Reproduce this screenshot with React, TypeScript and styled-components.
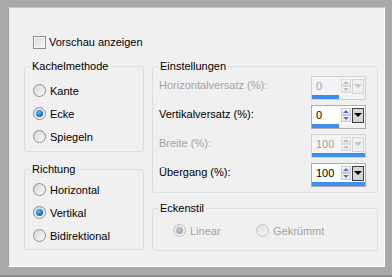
import styled, { createGlobalStyle } from "styled-components";

const Global = createGlobalStyle`
  html, body {
    margin: 0;
    padding: 0;
    background: #a9a9a9;
  }
  body {
    font-family: "Liberation Sans", Arial, sans-serif;
    font-size: 11px;
    color: #000;
  }
`;

const Frame = styled.div`
  width: 392px;
  height: 277px;
  box-sizing: border-box;
  padding: 7px 7px 8px 8px;
  background: #a9a9a9;
  border-bottom: 2px solid #8c8c8c;
`;

const Panel = styled.div`
  height: 100%;
  box-sizing: border-box;
  background: #f0f0f0;
  border-top: 1px solid #c4c4c4;
  border-left: 1px solid #9c9c9c;
  border-right: 1px solid #ffffff;
  border-bottom: 1px solid #ffffff;
  padding: 28px 0 0 15px;
  display: flex;
  flex-direction: column;
`;

const CheckRow = styled.label`
  display: flex;
  align-items: center;
  gap: 3px;
  margin-left: 9px;
  height: 13px;
  line-height: 13px;
`;

const CheckBox = styled.span`
  width: 13px;
  height: 13px;
  box-sizing: border-box;
  border: 1px solid #8e8f8f;
  background: linear-gradient(135deg, #d8d8d8 0%, #f6f6f6 100%);
  box-shadow: inset 0 0 0 1px #f4f4f4;
`;

const Columns = styled.div`
  display: flex;
  gap: 8px;
  margin-top: 10px;
`;

const Column = styled.div<{ $width: number; $gap: number }>`
  width: ${({ $width }) => $width}px;
  display: flex;
  flex-direction: column;
  gap: ${({ $gap }) => $gap}px;
`;

const Group = styled.fieldset`
  margin: 0;
  min-width: 0;
  box-sizing: border-box;
  border: 1px solid #d5dfe5;
  border-radius: 3px;
  padding: 0;
`;

const Legend = styled.legend`
  margin-left: 5px;
  padding: 0 2px;
  line-height: 14px;
  font-size: 11px;
  color: #000;
`;

const GroupBody = styled.div<{ $pad: string; $row?: boolean }>`
  padding: ${({ $pad }) => $pad};
  display: flex;
  flex-direction: ${({ $row }) => ($row ? "row" : "column")};
`;

const RadioRow = styled.label<{ $disabled?: boolean; $width?: number }>`
  display: flex;
  align-items: center;
  gap: 4px;
  height: 23px;
  width: ${({ $width }) => ($width ? `${$width}px` : "auto")};
  color: ${({ $disabled }) => ($disabled ? "#a3a3a3" : "#000")};
`;

const RadioDot = styled.span<{ $checked?: boolean; $disabled?: boolean }>`
  position: relative;
  width: 13px;
  height: 13px;
  box-sizing: border-box;
  border-radius: 50%;
  border: 1px solid ${({ $disabled }) => ($disabled ? "#c2c2c2" : "#8e8f8f")};
  background: ${({ $disabled }) =>
    $disabled
      ? "linear-gradient(135deg, #e2e2e2 0%, #f4f4f4 100%)"
      : "linear-gradient(135deg, #d6d6d6 0%, #fbfbfb 100%)"};
  &::after {
    content: "";
    display: ${({ $checked }) => ($checked ? "block" : "none")};
    position: absolute;
    left: 2px;
    top: 2px;
    width: 7px;
    height: 7px;
    border-radius: 50%;
    background: ${({ $disabled }) =>
      $disabled
        ? "radial-gradient(circle at 40% 35%, #c8c8c8 0%, #9a9a9a 100%)"
        : "radial-gradient(circle at 40% 35%, #5fc0f5 0%, #1b79c4 55%, #0d3d6b 100%)"};
  }
`;

const FieldRow = styled.div`
  display: flex;
  justify-content: space-between;
  align-items: flex-start;
  height: 24px;
`;

const FieldLabel = styled.span<{ $disabled?: boolean }>`
  line-height: 18px;
  color: ${({ $disabled }) => ($disabled ? "#a3a3a3" : "#000")};
`;

const Spin = styled.div<{ $disabled?: boolean }>`
  width: 55px;
  box-sizing: border-box;
  border: 1px solid ${({ $disabled }) => ($disabled ? "#d2d2d2" : "#abadb3")};
  background: ${({ $disabled }) => ($disabled ? "#f4f4f4" : "#ffffff")};
  display: flex;
  flex-direction: column;
`;

const SpinTop = styled.div`
  height: 18px;
  display: flex;
  align-items: center;
`;

const SpinValue = styled.span<{ $disabled?: boolean }>`
  flex: 1;
  padding-left: 4px;
  line-height: 14px;
  color: ${({ $disabled }) => ($disabled ? "#a3a3a3" : "#000")};
`;

const Arrows = styled.div`
  width: 10px;
  height: 14px;
  display: flex;
  flex-direction: column;
  margin-right: 1px;
`;

const ArrowBtn = styled.span<{ $disabled?: boolean; $down?: boolean }>`
  height: 7px;
  box-sizing: border-box;
  border: 1px solid ${({ $disabled }) => ($disabled ? "#dadada" : "#c3c8d6")};
  background: linear-gradient(#fbfbfb, #e8e8e8);
  display: flex;
  align-items: center;
  justify-content: center;
  &::before {
    content: "";
    width: 0;
    height: 0;
    border-left: 3px solid transparent;
    border-right: 3px solid transparent;
    ${({ $down, $disabled }) =>
      $down
        ? `border-top: 3px solid ${$disabled ? "#c0c0c0" : "#5a70c8"};`
        : `border-bottom: 3px solid ${$disabled ? "#c0c0c0" : "#5a70c8"};`}
  }
`;

const DropBtn = styled.span<{ $disabled?: boolean }>`
  width: 12px;
  height: 15px;
  box-sizing: border-box;
  margin-right: 1px;
  border: 1px solid ${({ $disabled }) => ($disabled ? "#d4d4d4" : "#3c3c3c")};
  background: ${({ $disabled }) => ($disabled ? "#f0f0f0" : "#d6d6d6")};
  display: flex;
  align-items: center;
  justify-content: center;
  &::before {
    content: "";
    border-left: 4px solid transparent;
    border-right: 4px solid transparent;
    border-top: 4px solid ${({ $disabled }) => ($disabled ? "#c4c4c4" : "#000")};
  }
`;

const Track = styled.div`
  height: 4px;
  background: #eef3f8;
`;

const Fill = styled.div`
  height: 100%;
  background: #3a8ff0;
`;

function Radio({ label, checked, disabled, width }: { label: string; checked?: boolean; disabled?: boolean; width?: number }) {
  return (
    <RadioRow $disabled={disabled} $width={width}>
      <RadioDot $checked={checked} $disabled={disabled} />
      {label}
    </RadioRow>
  );
}

function SpinField({ label, value, fill, disabled }: { label: string; value: string; fill: number; disabled?: boolean }) {
  return (
    <FieldRow>
      <FieldLabel $disabled={disabled}>{label}</FieldLabel>
      <Spin $disabled={disabled}>
        <SpinTop>
          <SpinValue $disabled={disabled}>{value}</SpinValue>
          <Arrows>
            <ArrowBtn $disabled={disabled} />
            <ArrowBtn $disabled={disabled} $down />
          </Arrows>
          <DropBtn $disabled={disabled} />
        </SpinTop>
        <Track>
          <Fill style={{ width: `${fill}%` }} />
        </Track>
      </Spin>
    </FieldRow>
  );
}

export default function App() {
  return (
    <>
      <Global />
      <Frame>
        <Panel>
          <CheckRow>
            <CheckBox />
            Vorschau anzeigen
          </CheckRow>
          <Columns>
            <Column $width={120} $gap={10}>
              <Group>
                <Legend>Kachelmethode</Legend>
                <GroupBody $pad="6px 0 3px 8px">
                  <Radio label="Kante" />
                  <Radio label="Ecke" checked />
                  <Radio label="Spiegeln" />
                </GroupBody>
              </Group>
              <Group>
                <Legend>Richtung</Legend>
                <GroupBody $pad="2px 0 2px 8px">
                  <Radio label="Horizontal" />
                  <Radio label="Vertikal" checked />
                  <Radio label="Bidirektional" />
                </GroupBody>
              </Group>
            </Column>
            <Column $width={226} $gap={8}>
              <Group>
                <Legend>Einstellungen</Legend>
                <GroupBody $pad="3px 11px 5px 6px" style={{ gap: 5 }}>
                  <SpinField label="Horizontalversatz (%):" value="0" fill={50} disabled />
                  <SpinField label="Vertikalversatz (%):" value="0" fill={50} />
                  <SpinField label="Breite (%):" value="100" fill={100} disabled />
                  <SpinField label="Übergang (%):" value="100" fill={100} />
                </GroupBody>
              </Group>
              <Group>
                <Legend>Eckenstil</Legend>
                <GroupBody $pad="4px 0 8px 20px" $row>
                  <Radio label="Linear" checked disabled width={83} />
                  <Radio label="Gekrümmt" disabled />
                </GroupBody>
              </Group>
            </Column>
          </Columns>
        </Panel>
      </Frame>
    </>
  );
}
